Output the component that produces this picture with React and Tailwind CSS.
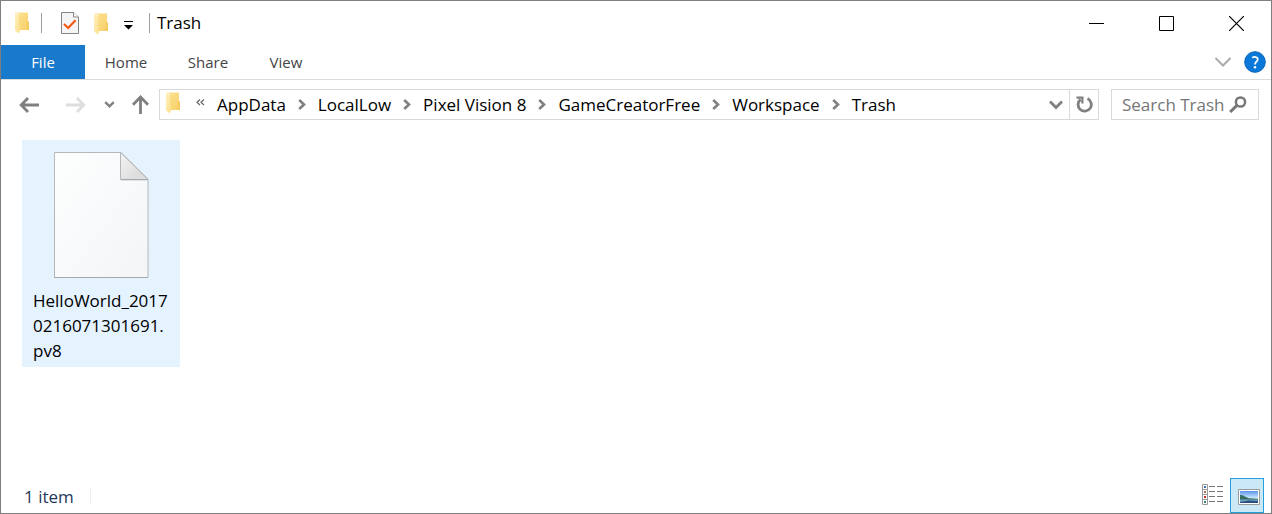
import React from "react";

const crumbs = ["AppData", "LocalLow", "Pixel Vision 8", "GameCreatorFree", "Workspace", "Trash"];

function FolderIcon() {
  return (
    <svg width="15" height="22" viewBox="0 0 15 22" aria-hidden="true">
      <defs>
        <linearGradient id="folderBack" x1="0" y1="0" x2="1" y2="1">
          <stop offset="0" stopColor="#fde396" />
          <stop offset="1" stopColor="#f7cf66" />
        </linearGradient>
        <linearGradient id="folderFlap" x1="0" y1="0" x2="1" y2="1">
          <stop offset="0" stopColor="#fff0bf" />
          <stop offset="1" stopColor="#fcdf88" />
        </linearGradient>
      </defs>
      <path d="M0 0.5H13V9L14 10V18H4V2Z" fill="url(#folderBack)" />
      <path d="M12 9H13L14 10V18H12Z" fill="#f0bf4b" opacity="0.4" />
      <path d="M0 0.5L4 3V13L5 14V18.5L4 21.5L0 18.5Z" fill="url(#folderFlap)" />
    </svg>
  );
}

function PropertiesIcon() {
  return (
    <svg width="18" height="22" viewBox="0 0 18 22" aria-hidden="true">
      <path d="M0.5 0.5H12.5L17.5 5V21.5H0.5Z" fill="#f5f5f5" stroke="#858585" />
      <path d="M12.5 0.5V5H17.5" fill="#ffffff" stroke="#858585" />
      <path d="M3 12L7.2 16L14.5 8.3" fill="none" stroke="#f4590f" strokeWidth="2.2" />
    </svg>
  );
}

function Chevron() {
  return (
    <svg width="8" height="11" viewBox="0 0 8 11" aria-hidden="true">
      <path d="M1.2 1L6 5.5L1.2 10" fill="none" stroke="#808080" strokeWidth="2.6" />
    </svg>
  );
}

function FileIcon() {
  return (
    <svg width="95" height="127" viewBox="0 0 95 127" aria-hidden="true">
      <defs>
        <linearGradient id="paper" x1="0" y1="0" x2="1" y2="1">
          <stop offset="0" stopColor="#fdfefe" />
          <stop offset="1" stopColor="#f3f5f7" />
        </linearGradient>
        <linearGradient id="fold" x1="0" y1="0" x2="1" y2="1">
          <stop offset="0" stopColor="#f4f4f5" />
          <stop offset="0.7" stopColor="#dededf" />
        </linearGradient>
      </defs>
      <path d="M0.5 0.5H67L94 27V125.5H0.5Z" fill="url(#paper)" stroke="#b5b8ba" />
      <path d="M66.5 0.5V27.5H94Z" fill="url(#fold)" stroke="#b5b8ba" />
      <path d="M67 27.5H94" stroke="#a6a8aa" />
      <path d="M67 28.5H93" stroke="#e1e3e5" />
      <path d="M0 125.5H94" stroke="#a6a8aa" />
    </svg>
  );
}

export default function App() {
  return (
    <div className="flex min-h-screen flex-col border border-[#7f7f7f] bg-white font-['Open_Sans','Noto_Sans',sans-serif] text-[17px] leading-6 text-black">
      <header className="flex h-11 items-center pl-3.5">
        <FolderIcon />
        <span className="ml-[11px] h-5 w-px bg-[#a0a0a0]" />
        <button aria-label="Properties" className="ml-[19px]"><PropertiesIcon /></button>
        <button aria-label="New folder" className="ml-[15px] pt-0.5"><FolderIcon /></button>
        <button aria-label="Customize toolbar" className="ml-3.5 mt-1">
          <svg width="11" height="9" viewBox="0 0 11 9" aria-hidden="true">
            <path d="M1 0H10V1H1ZM1 4H10L5.5 8.5Z" fill="#000" />
          </svg>
        </button>
        <span className="ml-[15px] h-5 w-px bg-[#a0a0a0]" />
        <h1 className="ml-[7px]">Trash</h1>
        <div className="ml-auto flex items-center gap-[55px] pr-[27px]">
          <button aria-label="Minimize">
            <svg width="15" height="15" viewBox="0 0 15 15" aria-hidden="true"><path d="M0 7.5H15" stroke="#000" /></svg>
          </button>
          <button aria-label="Maximize">
            <svg width="15" height="15" viewBox="0 0 15 15" aria-hidden="true"><path d="M0.5 0.5H14.5V14.5H0.5Z" fill="none" stroke="#000" /></svg>
          </button>
          <button aria-label="Close">
            <svg width="15" height="15" viewBox="0 0 15 15" aria-hidden="true"><path d="M0 0L15 15M15 0L0 15" stroke="#000" strokeWidth="1.2" /></svg>
          </button>
        </div>
      </header>

      <nav className="flex h-[35px] items-stretch border-b border-[#dadbdc] text-[15px] text-[#444444]">
        <button className="w-[84px] bg-[#1979ca] text-white">File</button>
        <button className="w-[82px]">Home</button>
        <button className="w-[82px]">Share</button>
        <button className="w-[74px]">View</button>
        <div className="ml-auto flex items-center gap-3 pr-[5px]">
          <button aria-label="Collapse ribbon">
            <svg width="18" height="10" viewBox="0 0 18 10" aria-hidden="true">
              <path d="M1.5 1L9 8.5L16.5 1" fill="none" stroke="#aaaaaa" strokeWidth="2" />
            </svg>
          </button>
          <button aria-label="Help">
            <svg width="22" height="22" viewBox="0 0 23 23" aria-hidden="true">
              <circle cx="11.5" cy="11.5" r="10.8" fill="#0a78d8" stroke="#0763b8" />
              <path d="M8.6 7C10.4 5.8 14.4 5.8 14.4 8.7C14.4 11.2 11.5 11.3 11.5 14" fill="none" stroke="#fff" strokeWidth="1.8" />
              <circle cx="11.5" cy="17" r="1.3" fill="#fff" />
            </svg>
          </button>
        </div>
      </nav>

      <div className="flex items-center pl-[18px] pr-3 pt-[9px]">
        <button aria-label="Back">
          <svg width="21" height="16" viewBox="0 0 21 16" aria-hidden="true">
            <path d="M20 8H3M9 1L2.2 8L9 15" fill="none" stroke="#808080" strokeWidth="2.8" />
          </svg>
        </button>
        <button aria-label="Forward" disabled className="ml-[26px]">
          <svg width="21" height="16" viewBox="0 0 21 16" aria-hidden="true">
            <path d="M0 8H17M11 1L17.8 8L11 15" fill="none" stroke="#dedede" strokeWidth="2.8" />
          </svg>
        </button>
        <button aria-label="Recent locations" className="ml-[17px]">
          <svg width="11" height="8" viewBox="0 0 11 8" aria-hidden="true">
            <path d="M1.3 1.2L5.5 5.4L9.7 1.2" fill="none" stroke="#808080" strokeWidth="2.4" />
          </svg>
        </button>
        <button aria-label="Up" className="ml-[17px]">
          <svg width="17" height="19" viewBox="0 0 17 19" aria-hidden="true">
            <path d="M8.5 19V3M1 9.8L8.5 2L16 9.8" fill="none" stroke="#808080" strokeWidth="2.8" />
          </svg>
        </button>

        <div className="ml-2.5 flex h-[31px] min-w-0 flex-1 items-stretch border border-[#d9d9d9]">
          <div className="flex flex-1 items-center pl-1.5">
            <span className="pb-1"><FolderIcon /></span>
            <button aria-label="Earlier locations" className="ml-[15px] mr-3 pb-1">
              <svg width="9" height="7" viewBox="0 0 9 7" aria-hidden="true">
                <path d="M4 0.5L1 3.2L4 6M8 0.5L5 3.2L8 6" fill="none" stroke="#666666" strokeWidth="1.2" />
              </svg>
            </button>
            <ol className="flex items-center gap-3">
              {crumbs.map((name, i) => (
                <li key={name} className="flex items-center gap-3">
                  {i > 0 && <Chevron />}
                  <button>{name}</button>
                </li>
              ))}
            </ol>
          </div>
          <button aria-label="Previous locations" className="px-1.5">
            <svg width="14" height="10" viewBox="0 0 14 10" aria-hidden="true">
              <path d="M1 1.5L7 7.5L13 1.5" fill="none" stroke="#808080" strokeWidth="2.8" />
            </svg>
          </button>
          <button aria-label="Refresh" className="border-l border-[#d9d9d9] pl-1.5 pr-[5px]">
            <svg width="17" height="17" viewBox="0 0 17 17" aria-hidden="true">
              <path d="M11.5 2.6A6.6 6.6 0 1 1 4.6 3.4" fill="none" stroke="#808080" strokeWidth="2.8" />
              <path d="M0.5 1.6H6.4V7.6" fill="none" stroke="#808080" strokeWidth="2.2" />
            </svg>
          </button>
        </div>

        <label className="ml-3 flex h-[31px] w-[148px] items-center border border-[#d9d9d9] pl-2.5">
          <input aria-label="Search Trash" placeholder="Search Trash" className="w-[107px] bg-transparent outline-none placeholder:text-[#767676]" />
          <svg width="18" height="17" viewBox="0 0 18 17" aria-hidden="true">
            <circle cx="11.5" cy="6" r="4.6" fill="none" stroke="#777777" strokeWidth="2.5" />
            <path d="M8 9.2L1.2 16" stroke="#777777" strokeWidth="3" />
          </svg>
        </label>
      </div>

      <main className="flex-1 px-[21px] pt-5">
        <button className="flex h-[227px] w-[158px] flex-col items-center bg-[#e5f3ff] pt-3">
          <FileIcon />
          <span className="mt-[9px] w-[136px] break-all text-left leading-[25px]">HelloWorld_2017<wbr />0216071301691.<wbr />pv8</span>
        </button>
      </main>

      <footer className="flex h-[35px] items-center pl-[23px] pr-[7px] text-[17px] text-[#1e395b]">
        <span className="pt-0.5">1 item</span>
        <span className="ml-4 h-4 w-px bg-[#f0f0f0]" />
        <div className="ml-auto flex h-full items-center">
          <button aria-label="Details view" className="pb-0.5 pr-[5px]">
            <svg width="23" height="21" viewBox="0 0 23 21" aria-hidden="true">
              <path d="M0.5 0.5H5.5V20.5H0.5ZM0.5 5.5H5.5M0.5 10.5H5.5M0.5 15.5H5.5" fill="#fff" stroke="#999999" />
              <path d="M7 2.5H13M15 2.5H21M7 7.5H13M15 7.5H21M7 12.5H13M15 12.5H21M7 17.5H13M15 17.5H21" stroke="#777777" />
              <path d="M2 2H4V4H2Z" fill="#3c78b4" />
              <path d="M2 7H4V9H2Z" fill="#a87252" />
              <path d="M2 12H4V14H2Z" fill="#d02828" />
              <path d="M2 17H4V19H2Z" fill="#398c70" />
            </svg>
          </button>
          <button aria-label="Large icons view" className="flex h-full w-[34px] items-center justify-center border border-[#26a0da] bg-[#cbe8f6] pl-1 pt-0.5">
            <svg width="22" height="16" viewBox="0 0 22 16" aria-hidden="true">
              <defs>
                <linearGradient id="thumbSky" x1="0" y1="0" x2="0" y2="1">
                  <stop offset="0" stopColor="#5c94ed" />
                  <stop offset="0.65" stopColor="#d9f3fb" />
                </linearGradient>
              </defs>
              <path d="M0.5 0.5H21.5V15.5H0.5Z" fill="#fff" stroke="#999999" />
              <path d="M2 2H20V14H2Z" fill="url(#thumbSky)" />
              <path d="M2 6C5 5.5 7 8 11 9.3L20 9.8V11H2Z" fill="#366e62" />
              <path d="M2 10.5H20V14H2Z" fill="#6fa3c0" />
              <path d="M2 13L11 11.5L20 12V14H2Z" fill="#274f83" />
            </svg>
          </button>
        </div>
      </footer>
    </div>
  );
}
